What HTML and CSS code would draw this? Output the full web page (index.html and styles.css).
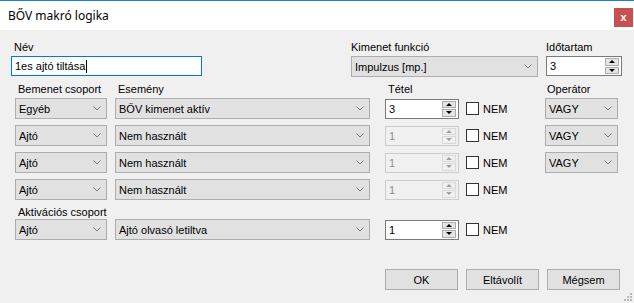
FILE: index.html
```html
<!DOCTYPE html>
<html lang="hu">
<head>
  <meta charset="UTF-8" />
  <title>BŐV makró logika</title>
  <link rel="stylesheet" href="styles.css">
</head>
<body>
  <div class="window">

    <!-- Title bar -->
    <div class="titlebar">
      <span class="title">BŐV makró logika</span>
      <span class="close">x</span>
    </div>

    <div class="content">
      <!-- Name / function / duration -->
      <div class="top">
        <div class="field f-name">
          <label>Név</label>
          <div class="textbox">1es ajtó tiltása<span class="caret"></span></div>
        </div>
        <div class="field f-func">
          <label>Kimenet funkció</label>
          <div class="combo">Impulzus [mp.]<svg class="chev" width="8" height="5" viewBox="0 0 8 5"><polyline points="0.5,0.5 4,4 7.5,0.5" fill="none" stroke="#7a7a7a" stroke-width="1"/></svg></div>
        </div>
        <div class="field f-dur">
          <label>Időtartam</label>
          <div class="spin"><span class="val">3</span><span class="arrows"><i class="up"></i><i class="down"></i></span></div>
        </div>
      </div>

      <!-- Column headers -->
      <div class="heads">
        <span class="c-group">Bemenet csoport</span>
        <span class="c-event">Esemény</span>
        <span class="c-item">Tétel</span>
        <span class="c-check"></span>
        <span class="c-op">Operátor</span>
      </div>

      <div class="row">
        <div class="combo c-group">Egyéb<svg class="chev" width="8" height="5" viewBox="0 0 8 5"><polyline points="0.5,0.5 4,4 7.5,0.5" fill="none" stroke="#7a7a7a"/></svg></div>
        <div class="combo c-event">BŐV kimenet aktív<svg class="chev" width="8" height="5" viewBox="0 0 8 5"><polyline points="0.5,0.5 4,4 7.5,0.5" fill="none" stroke="#7a7a7a"/></svg></div>
        <div class="spin c-item"><span class="val">3</span><span class="arrows"><i class="up"></i><i class="down"></i></span></div>
        <div class="c-check"><span class="box"></span>NEM</div>
        <div class="combo c-op">VAGY<svg class="chev" width="8" height="5" viewBox="0 0 8 5"><polyline points="0.5,0.5 4,4 7.5,0.5" fill="none" stroke="#7a7a7a"/></svg></div>
      </div>

      <div class="row">
        <div class="combo c-group">Ajtó<svg class="chev" width="8" height="5" viewBox="0 0 8 5"><polyline points="0.5,0.5 4,4 7.5,0.5" fill="none" stroke="#7a7a7a"/></svg></div>
        <div class="combo c-event">Nem használt<svg class="chev" width="8" height="5" viewBox="0 0 8 5"><polyline points="0.5,0.5 4,4 7.5,0.5" fill="none" stroke="#7a7a7a"/></svg></div>
        <div class="spin c-item disabled"><span class="val">1</span><span class="arrows"><i class="up"></i><i class="down"></i></span></div>
        <div class="c-check"><span class="box"></span>NEM</div>
        <div class="combo c-op">VAGY<svg class="chev" width="8" height="5" viewBox="0 0 8 5"><polyline points="0.5,0.5 4,4 7.5,0.5" fill="none" stroke="#7a7a7a"/></svg></div>
      </div>

      <div class="row">
        <div class="combo c-group">Ajtó<svg class="chev" width="8" height="5" viewBox="0 0 8 5"><polyline points="0.5,0.5 4,4 7.5,0.5" fill="none" stroke="#7a7a7a"/></svg></div>
        <div class="combo c-event">Nem használt<svg class="chev" width="8" height="5" viewBox="0 0 8 5"><polyline points="0.5,0.5 4,4 7.5,0.5" fill="none" stroke="#7a7a7a"/></svg></div>
        <div class="spin c-item disabled"><span class="val">1</span><span class="arrows"><i class="up"></i><i class="down"></i></span></div>
        <div class="c-check"><span class="box"></span>NEM</div>
        <div class="combo c-op">VAGY<svg class="chev" width="8" height="5" viewBox="0 0 8 5"><polyline points="0.5,0.5 4,4 7.5,0.5" fill="none" stroke="#7a7a7a"/></svg></div>
      </div>

      <div class="row">
        <div class="combo c-group">Ajtó<svg class="chev" width="8" height="5" viewBox="0 0 8 5"><polyline points="0.5,0.5 4,4 7.5,0.5" fill="none" stroke="#7a7a7a"/></svg></div>
        <div class="combo c-event">Nem használt<svg class="chev" width="8" height="5" viewBox="0 0 8 5"><polyline points="0.5,0.5 4,4 7.5,0.5" fill="none" stroke="#7a7a7a"/></svg></div>
        <div class="spin c-item disabled"><span class="val">1</span><span class="arrows"><i class="up"></i><i class="down"></i></span></div>
        <div class="c-check"><span class="box"></span>NEM</div>
      </div>

      <div class="act-label">Aktivációs csoport</div>

      <div class="row">
        <div class="combo c-group">Ajtó<svg class="chev" width="8" height="5" viewBox="0 0 8 5"><polyline points="0.5,0.5 4,4 7.5,0.5" fill="none" stroke="#7a7a7a"/></svg></div>
        <div class="combo c-event">Ajtó olvasó letiltva<svg class="chev" width="8" height="5" viewBox="0 0 8 5"><polyline points="0.5,0.5 4,4 7.5,0.5" fill="none" stroke="#7a7a7a"/></svg></div>
        <div class="spin c-item"><span class="val">1</span><span class="arrows"><i class="up"></i><i class="down"></i></span></div>
        <div class="c-check"><span class="box"></span>NEM</div>
      </div>

      <!-- Dialog buttons -->
      <div class="buttons">
        <button class="btn">OK</button>
        <button class="btn">Eltávolít</button>
        <button class="btn">Mégsem</button>
      </div>
    </div>

    <svg class="grip" width="8" height="8" viewBox="0 0 8 8">
      <rect x="6" y="0" width="2" height="2" fill="#b8b8b8"/>
      <rect x="3" y="3" width="2" height="2" fill="#b8b8b8"/>
      <rect x="6" y="3" width="2" height="2" fill="#b8b8b8"/>
      <rect x="0" y="6" width="2" height="2" fill="#b8b8b8"/>
      <rect x="3" y="6" width="2" height="2" fill="#b8b8b8"/>
      <rect x="6" y="6" width="2" height="2" fill="#b8b8b8"/>
    </svg>
  </div>
</body>
</html>
```

FILE: styles.css
```css
* {
  box-sizing: border-box;
  margin: 0;
  padding: 0;
}

body {
  background: #f0f0f0;
}

.window {
  position: relative;
  width: 634px;
  height: 303px;
  background: #f0f0f0;
  border-top: 1px solid #1883d7;
  font-family: "Liberation Sans", Arial, sans-serif;
  font-size: 11px;
  color: #000;
  overflow: hidden;
}

/* Title bar */
.titlebar {
  height: 29px;
  background: #fff;
  display: flex;
  align-items: center;
  padding-left: 8px;
  padding-right: 1px;
}

.title {
  font-family: "Noto Sans", "Open Sans", sans-serif;
  font-size: 12px;
  color: #000;
}

.close {
  margin-left: auto;
  align-self: flex-start;
  margin-top: 7px;
  width: 19px;
  height: 19px;
  background: #c75050;
  color: #fff;
  font-weight: bold;
  font-size: 11px;
  line-height: 18px;
  text-align: center;
}

.content {
  padding-top: 11px;
}

label {
  display: block;
  line-height: 13px;
  margin-bottom: 2px;
}

/* Top row */
.top {
  display: flex;
}

.field {
  display: flex;
  flex-direction: column;
}

.f-name {
  margin-left: 11px;
  width: 191px;
}

.f-name label {
  padding-left: 3px;
}

.f-func {
  margin-left: 149px;
  width: 187px;
}

.f-dur {
  margin-left: 8px;
  width: 76px;
}

.textbox {
  height: 20px;
  background: #fff;
  border: 1px solid #0078d7;
  padding-left: 3px;
  display: flex;
  align-items: center;
}

.caret {
  display: inline-block;
  width: 1px;
  height: 13px;
  background: #000;
  margin-left: 1px;
}

/* Controls */
.combo {
  height: 21px;
  background: #e1e1e1;
  border: 1px solid #adadad;
  padding-left: 3px;
  display: flex;
  align-items: center;
  white-space: nowrap;
}

.chev {
  margin-left: auto;
  margin-right: 5px;
  flex-shrink: 0;
}

.spin {
  height: 20px;
  background: #fff;
  border: 1px solid #7a7a7a;
  display: flex;
  align-items: stretch;
}

.spin .val {
  flex: 1;
  padding-left: 3px;
  display: flex;
  align-items: center;
}

.arrows {
  width: 14px;
  margin: 1px 2px 1px 0;
  display: flex;
  flex-direction: column;
  gap: 1px;
}

.arrows i {
  flex: 1;
  background: #e5e5e5;
  border: 1px solid #adadad;
  display: flex;
  align-items: center;
  justify-content: center;
}

.arrows i::after {
  content: "";
  border-left: 3px solid transparent;
  border-right: 3px solid transparent;
}

.arrows .up::after {
  border-bottom: 3px solid #000;
}

.arrows .down::after {
  border-top: 3px solid #000;
}

.spin.disabled {
  background: #f0f0f0;
  border-color: #cccccc;
  color: #8d8d8d;
}

.spin.disabled .arrows i {
  background: #f0f0f0;
  border-color: #d9d9d9;
}

.spin.disabled .arrows .up::after {
  border-bottom-color: #a0a0a0;
}

.spin.disabled .arrows .down::after {
  border-top-color: #a0a0a0;
}

/* Grid rows */
.heads,
.row {
  display: flex;
  padding-left: 15px;
}

.heads {
  margin-top: 6px;
  margin-bottom: 2px;
  line-height: 13px;
}

.heads span {
  padding-left: 3px;
}

.heads .c-op {
  padding-left: 2px;
}

.row {
  height: 21px;
  align-items: center;
  margin-bottom: 6px;
}

.c-group {
  width: 92px;
}

.c-event {
  width: 255px;
  margin-left: 8px;
}

.c-item {
  width: 74px;
  margin-left: 15px;
}

.c-check {
  width: 79px;
  margin-left: 7px;
  display: flex;
  align-items: center;
}

.box {
  width: 13px;
  height: 13px;
  background: #fff;
  border: 1px solid #333;
  margin-right: 4px;
}

.c-op {
  width: 73px;
}

.act-label {
  padding-left: 18px;
  line-height: 13px;
}

/* Buttons */
.buttons {
  display: flex;
  justify-content: flex-end;
  gap: 8px;
  padding-right: 14px;
  margin-top: 29px;
}

.btn {
  width: 73px;
  height: 21px;
  background: #e1e1e1;
  border: 1px solid #adadad;
  font-family: "Liberation Sans", Arial, sans-serif;
  font-size: 11px;
  color: #000;
}

.grip {
  position: absolute;
  right: 2px;
  bottom: 2px;
}
```
